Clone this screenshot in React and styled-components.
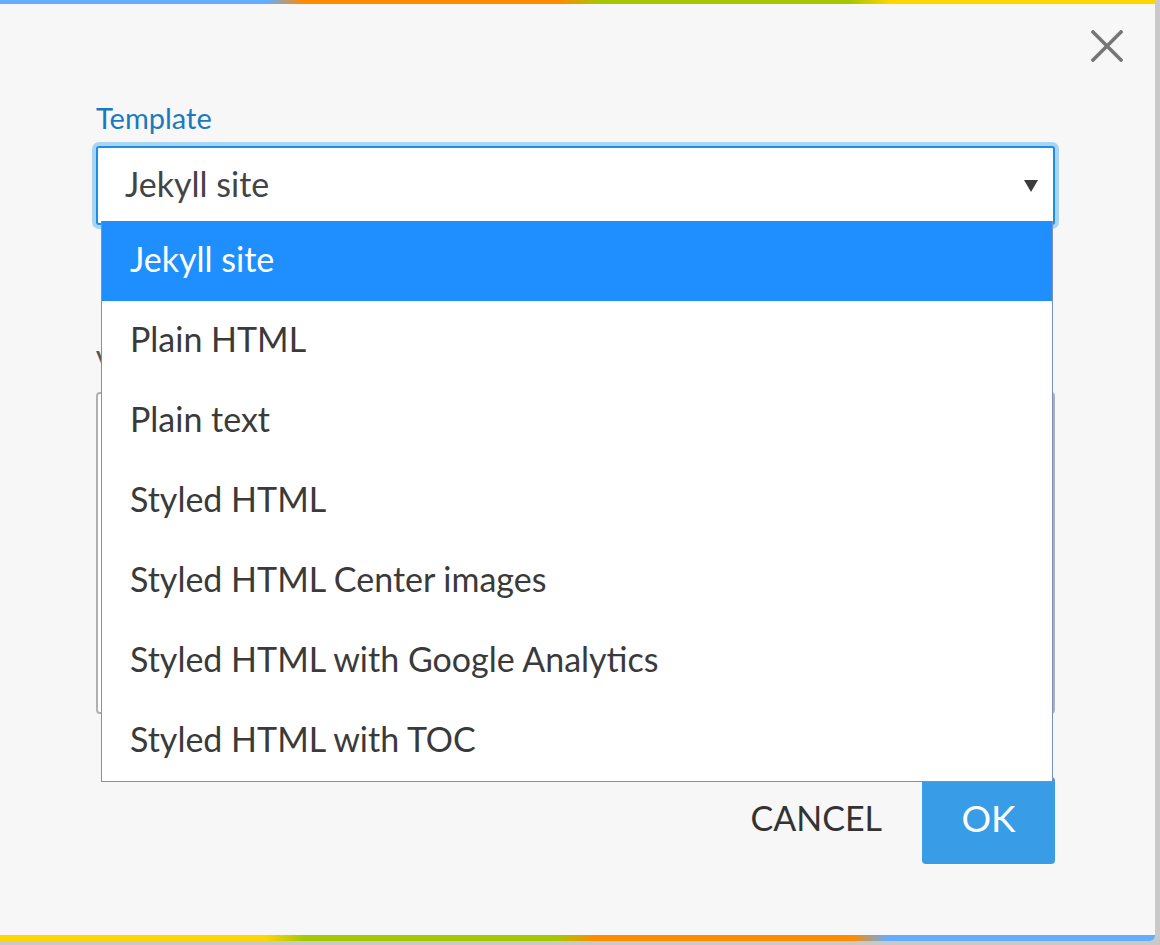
import styled, { createGlobalStyle } from "styled-components";

const GlobalStyle = createGlobalStyle`
    html, body {
        margin: 0;
        padding: 0;
        background: #c9c9c9;
        font-family: Lato, "Open Sans", sans-serif;
        overflow: hidden;
    }
    * {
        box-sizing: border-box;
    }
`;

const stripe = "#64acfc 0px, #64acfc 268px, #ff8b00 302px, #ff8b00 560px, #a6c800 600px, #a6c800 850px, #ffd600 890px, #ffd600 100%";

const Dialog = styled.div`
    width: 1155px;
    height: 941px;
    background: #f7f7f7;
    display: flex;
    flex-direction: column;
    border-radius: 0 0 5px 0;
    overflow: hidden;
`;

const ColorBar = styled.div`
    height: ${(props) => props.$height}px;
    flex-shrink: 0;
    background: linear-gradient(${(props) => (props.$reverse ? "to left" : "to right")}, ${stripe});
`;

const Header = styled.div`
    display: flex;
    justify-content: flex-end;
    padding: 22px 28px 0 0;
`;

const CloseButton = styled.button`
    width: 40px;
    height: 40px;
    border: none;
    background: transparent;
    padding: 4px;
    cursor: pointer;
    display: flex;
    align-items: center;
    justify-content: center;
`;

const Body = styled.div`
    flex: 1;
    display: flex;
    flex-direction: column;
    padding: 35px 100px 0 96px;
`;

const Label = styled.label`
    display: block;
    font-size: 29px;
    line-height: 34px;
    color: ${(props) => (props.$active ? "#1a7abf" : "#555")};
    margin-top: ${(props) => props.$top || 0}px;
    margin-bottom: ${(props) => props.$gap}px;
`;

const SelectWrap = styled.div`
    position: relative;
`;

const SelectBox = styled.div`
    height: 79px;
    display: flex;
    align-items: center;
    justify-content: space-between;
    padding: 0 15px 5px 27px;
    background: #fff;
    border: 2px solid #1b8fe6;
    border-radius: 3px;
    box-shadow: 0 0 0 4px #a9d5f2;
    font-size: 34px;
    color: #444;
`;

const Arrow = styled.span`
    width: 0;
    height: 0;
    margin-top: 5px;
    border-left: 7px solid transparent;
    border-right: 7px solid transparent;
    border-top: 12px solid #3c3c3c;
`;

const Menu = styled.ul`
    position: absolute;
    top: 75px;
    left: 5px;
    right: 2px;
    margin: 0;
    padding: 0;
    list-style: none;
    background: #fff;
    border: 1px solid #7891c0;
    border-top: none;
    z-index: 10;
`;

const MenuItem = styled.li`
    height: 80px;
    display: flex;
    align-items: center;
    padding: 0 0 5px 28px;
    font-size: 34px;
    color: ${(props) => (props.$selected ? "#fff" : "#3a3a3a")};
    background: ${(props) => (props.$selected ? "#1f8fff" : "#fff")};
`;

const TextArea = styled.div`
    height: 322px;
    background: #fff;
    border: 2px solid #b0b0b0;
    border-radius: 4px;
`;

const Actions = styled.div`
    display: flex;
    justify-content: flex-end;
    align-items: center;
    gap: 20px;
    margin-top: 63px;
`;

const ActionButton = styled.button`
    height: 87px;
    padding: 0 ${(props) => (props.$primary ? "0" : "20px")} 7px;
    width: ${(props) => (props.$primary ? "133px" : "auto")};
    border: none;
    border-radius: 4px;
    font-family: Lato, "Open Sans", sans-serif;
    font-size: ${(props) => (props.$primary ? "37px" : "34px")};
    color: ${(props) => (props.$primary ? "#fff" : "#333")};
    background: ${(props) => (props.$primary ? "#389ce6" : "transparent")};
    cursor: pointer;
`;

const templates = [
    "Jekyll site",
    "Plain HTML",
    "Plain text",
    "Styled HTML",
    "Styled HTML Center images",
    "Styled HTML with Google Analytics",
    "Styled HTML with TOC",
];

const App = () => {
    const selected = "Jekyll site";

    return (
        <>
            <GlobalStyle />
            <Dialog>
                <ColorBar $height={4} />
                <Header>
                    <CloseButton aria-label="Close">
                        <svg width="32" height="32" viewBox="0 0 32 32">
                            <path d="M2 2 L30 30 M30 2 L2 30" stroke="#767676" strokeWidth="3.6" strokeLinecap="square" />
                        </svg>
                    </CloseButton>
                </Header>
                <Body>
                    <Label $active $gap={11}>Template</Label>
                    <SelectWrap>
                        <SelectBox>
                            <span>{selected}</span>
                            <Arrow />
                        </SelectBox>
                        <Menu>
                            {templates.map((t) => (
                                <MenuItem key={t} $selected={t === selected}>{t}</MenuItem>
                            ))}
                        </Menu>
                    </SelectWrap>
                    <Label $top={119} $gap={14}>Values</Label>
                    <TextArea />
                    <Actions>
                        <ActionButton>CANCEL</ActionButton>
                        <ActionButton $primary>OK</ActionButton>
                    </Actions>
                </Body>
                <ColorBar $height={6} $reverse />
            </Dialog>
        </>
    );
};

export default App;
